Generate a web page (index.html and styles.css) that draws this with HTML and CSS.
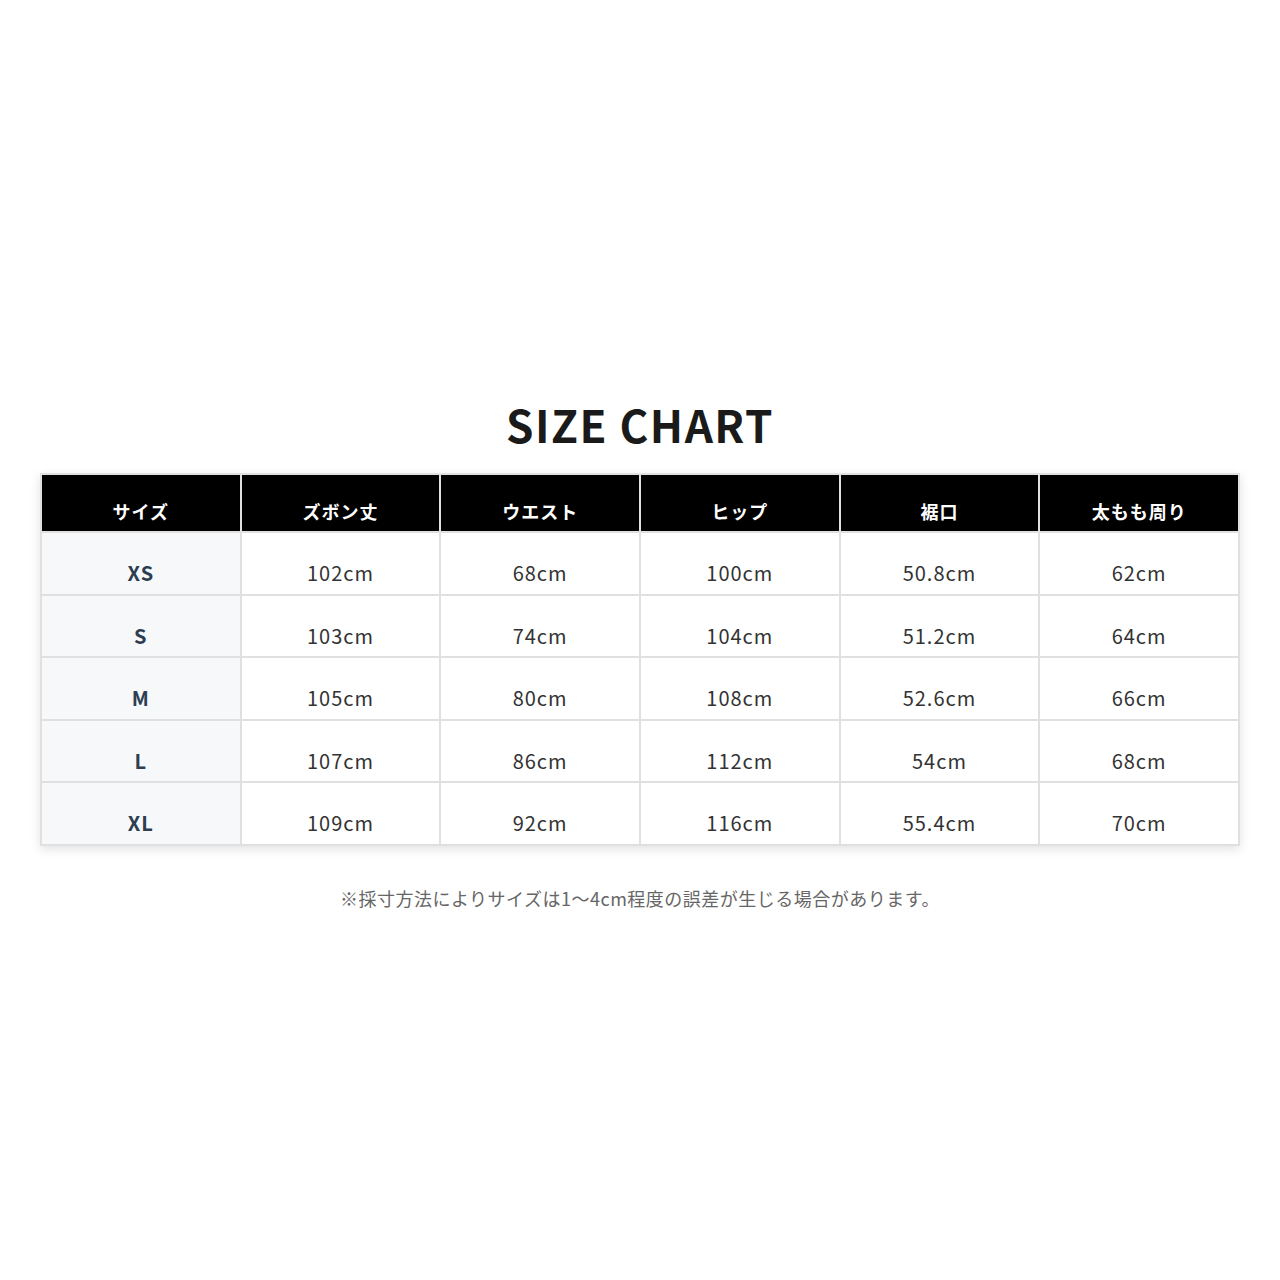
FILE: index.html
```html
<!DOCTYPE html>
<html lang="ja">
<head>
<meta charset="utf-8">
<link rel="stylesheet" href="styles.css">
</head>
<body>
<main class="page">
  <h1 class="title">SIZE CHART</h1>
  <table class="chart">
    <thead>
      <tr>
        <th>サイズ</th><th>ズボン丈</th><th>ウエスト</th><th>ヒップ</th><th>裾口</th><th>太もも周り</th>
      </tr>
    </thead>
    <tbody>
      <tr><td class="size">XS</td><td>102cm</td><td>68cm</td><td>100cm</td><td>50.8cm</td><td>62cm</td></tr>
      <tr><td class="size">S</td><td>103cm</td><td>74cm</td><td>104cm</td><td>51.2cm</td><td>64cm</td></tr>
      <tr><td class="size">M</td><td>105cm</td><td>80cm</td><td>108cm</td><td>52.6cm</td><td>66cm</td></tr>
      <tr><td class="size">L</td><td>107cm</td><td>86cm</td><td>112cm</td><td>54cm</td><td>68cm</td></tr>
      <tr><td class="size">XL</td><td>109cm</td><td>92cm</td><td>116cm</td><td>55.4cm</td><td>70cm</td></tr>
    </tbody>
  </table>
  <p class="note">※採寸方法によりサイズは1〜4cm程度の誤差が生じる場合があります。</p>
</main>
</body>
</html>
```

FILE: styles.css
```css
html, body {
  margin: 0;
  padding: 0;
  background: #ffffff;
}
body {
  font-family: "Noto Sans CJK JP", "Noto Sans", sans-serif;
  color: #333333;
}
.page {
  display: flex;
  flex-direction: column;
  align-items: center;
  padding: 390px 40px 0;
}
.title {
  margin: 0;
  font-size: 44px;
  font-weight: 700;
  letter-spacing: 1.5px;
  line-height: 68px;
  color: #1a1a1a;
}
.chart {
  margin-top: 15px;
  width: 1200px;
  border-collapse: separate;
  border-spacing: 2px;
  background: #e0e0e0;
  box-shadow: 0 3px 10px rgba(0, 0, 0, 0.12);
  table-layout: fixed;
}
.chart th {
  background: #000000;
  color: #ffffff;
  font-size: 18px;
  font-weight: 700;
  line-height: 27px;
  letter-spacing: 1px;
  padding: 23px 8px 6px;
  text-align: center;
}
.chart td {
  background: #ffffff;
  font-size: 20px;
  line-height: 30px;
  letter-spacing: 1px;
  padding: 25px 8px 5.5px;
  text-align: center;
  color: #333333;
}
.chart td.size {
  background: #f7f8fa;
  font-weight: 700;
  color: #2c3e50;
}
.note {
  margin: 40px 0 0;
  font-size: 18px;
  letter-spacing: 0.5px;
  color: #666666;
  line-height: 24px;
}
```
